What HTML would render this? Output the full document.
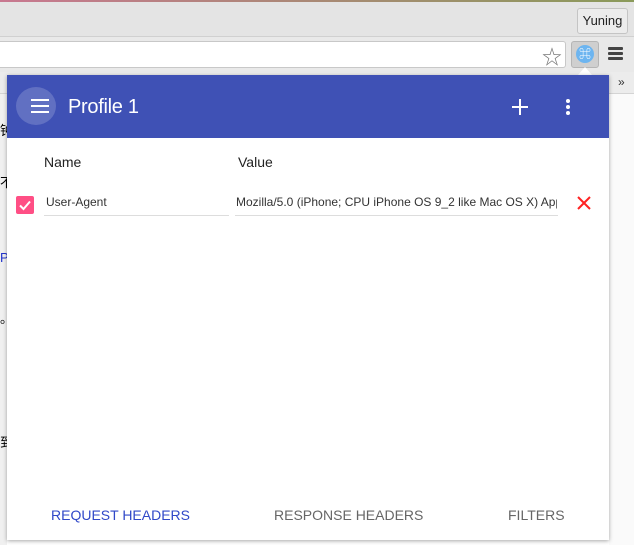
<!DOCTYPE html>
<html><head><meta charset="utf-8"><style>
*{margin:0;padding:0;box-sizing:border-box}
body{width:634px;height:545px;overflow:hidden;position:relative;background:#fff;font-family:"Liberation Sans","Noto Sans CJK SC",sans-serif}
.abs{position:absolute}
</style></head><body>
<div class="abs" style="left:0;top:0;width:634px;height:2px;background:linear-gradient(90deg,#c87890,#8a9a5a)"></div>
<div class="abs" style="left:0;top:2px;width:634px;height:34px;background:#e4e4e4"></div>
<div class="abs" style="left:577px;top:8px;width:51px;height:26px;border:1px solid #c4c4c4;border-radius:3px;background:#ececec;font-size:13px;line-height:24px;text-align:center;color:#222">Yuning</div>
<div class="abs" style="left:0;top:36px;width:634px;height:36px;background:#e9e9e9;border-top:1px solid #d0d0d0"></div>
<div class="abs" style="left:0;top:41px;width:566px;height:27px;background:#fff;border:1px solid #c8c8c8;border-left:none;border-radius:0 3px 3px 0"></div>
<div class="abs" style="left:542px;top:41px;font-size:20px;color:#777">☆</div>
<div class="abs" style="left:571px;top:41px;width:28px;height:27px;background:#cfcfcf;border:1px solid #b5b5b5;border-radius:3px"></div>
<div class="abs" style="left:576px;top:45px;width:18px;height:18px;border-radius:50%;background:#6db5f0;color:#fff;font-size:12px;line-height:18px;text-align:center">⌘</div>
<div class="abs" style="left:608px;top:47px;width:15px;height:3px;background:#444;box-shadow:0 5px 0 #444,0 10px 0 #444;border-radius:1px"></div>
<div class="abs" style="left:0;top:72px;width:634px;height:22px;background:#ececec;border-bottom:1px solid #d4d4d4"></div>
<div class="abs" style="left:618px;top:75px;font-size:12px;color:#333">»</div>
<div class="abs" style="left:0;top:94px;width:7px;height:451px;background:#f0f0f0"></div>
<div class="abs" style="left:0;top:120px;font-size:13px">钟</div>
<div class="abs" style="left:0;top:172px;font-size:13px">不</div>
<div class="abs" style="left:0;top:250px;font-size:13px;color:#23c">P</div>
<div class="abs" style="left:0;top:308px;font-size:13px">。</div>
<div class="abs" style="left:0;top:432px;font-size:13px">到</div>
<div class="abs" style="left:609px;top:94px;width:25px;height:451px;background:#fafafa"></div>
<div class="abs" style="left:578px;top:67px;width:0;height:0;border-left:7px solid transparent;border-right:7px solid transparent;border-bottom:8px solid #fff"></div>
<div class="abs" style="left:7px;top:75px;width:602px;height:465px;background:#fff;box-shadow:0 1px 4px rgba(0,0,0,.35)"></div>
<div class="abs" style="left:7px;top:75px;width:602px;height:63px;background:#3f51b5"></div>
<div class="abs" style="left:16px;top:87px;width:40px;height:38px;border-radius:50%;background:rgba(255,255,255,.18)"></div>
<div class="abs" style="left:31px;top:99px;width:18px;height:2px;background:#fff;box-shadow:0 6px 0 #fff,0 12px 0 #fff"></div>
<div class="abs" style="left:68px;top:96px;font-size:20px;color:#fff;letter-spacing:-0.3px">Profile 1</div>
<div class="abs" style="left:512px;top:106px;width:16px;height:2px;background:#fff"></div>
<div class="abs" style="left:519px;top:99px;width:2px;height:16px;background:#fff"></div>
<div class="abs" style="left:566px;top:99px;width:4px;height:4px;border-radius:50%;background:#fff;box-shadow:0 6px 0 #fff,0 12px 0 #fff"></div>
<div class="abs" style="left:44px;top:154px;font-size:14px;color:#222">Name</div>
<div class="abs" style="left:238px;top:154px;font-size:14px;color:#222">Value</div>
<div class="abs" style="left:16px;top:196px;width:18px;height:18px;background:#ff4f85;border-radius:2px"></div>
<svg class="abs" style="left:16px;top:196px" width="18" height="18"><path d="M4 9.5 L7.5 13 L14 5.5" stroke="#fff" stroke-width="2" fill="none"/></svg>
<div class="abs" style="left:46px;top:195px;font-size:12px;color:#333">User-Agent</div>
<div class="abs" style="left:44px;top:215px;width:185px;height:1px;background:#ddd"></div>
<div class="abs" style="left:236px;top:195px;width:321px;overflow:hidden;white-space:nowrap;font-size:12px;color:#333">Mozilla/5.0 (iPhone; CPU iPhone OS 9_2 like Mac OS X) AppleWebKit</div>
<div class="abs" style="left:235px;top:215px;width:323px;height:1px;background:#ddd"></div>
<svg class="abs" style="left:576px;top:195px" width="16" height="16"><path d="M2 2L14 14M14 2L2 14" stroke="#f22" stroke-width="2"/></svg>
<div class="abs" style="left:51px;top:507px;font-size:14px;color:#3048c8">REQUEST HEADERS</div>
<div class="abs" style="left:274px;top:507px;font-size:14px;color:#666">RESPONSE HEADERS</div>
<div class="abs" style="left:508px;top:507px;font-size:14px;color:#666">FILTERS</div>
</body></html>
